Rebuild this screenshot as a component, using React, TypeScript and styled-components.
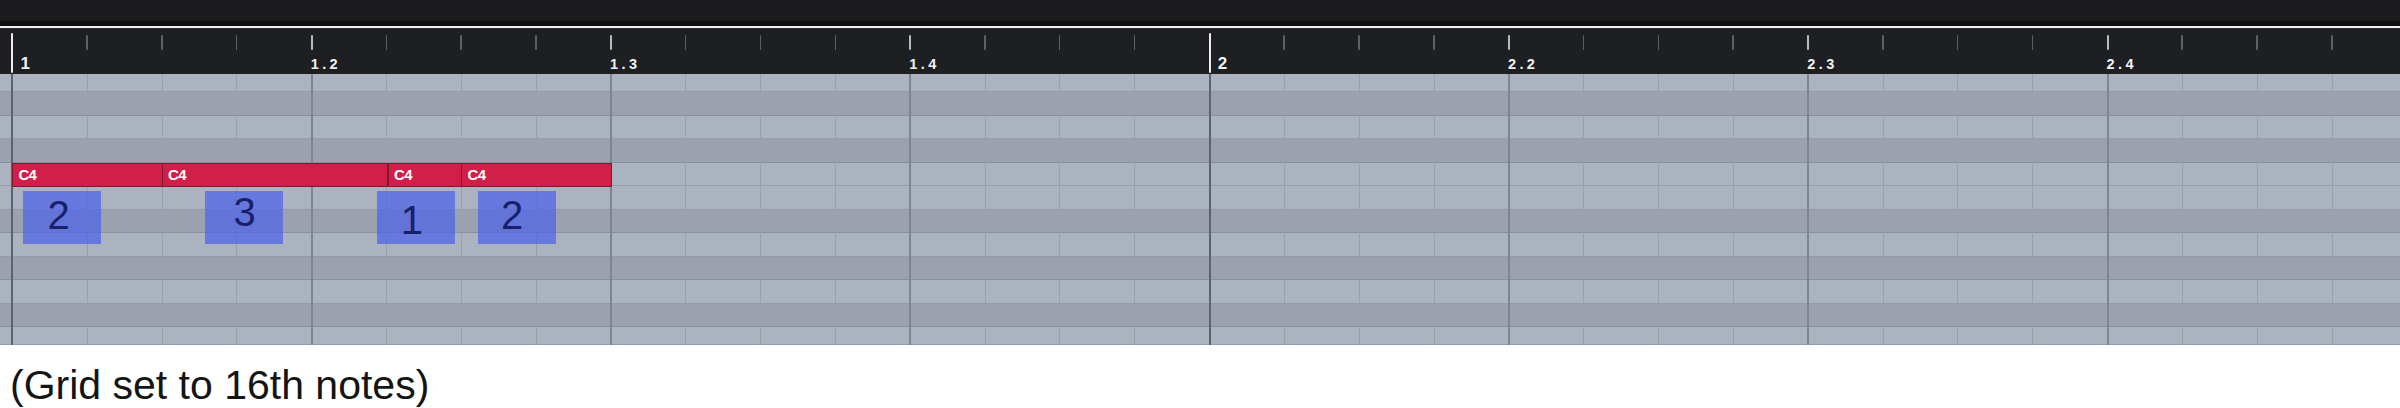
import React from "react";
import styled, { createGlobalStyle } from "styled-components";

const X0 = 12.4;
const W = 74.84;
const COLS = 32;

const Global = createGlobalStyle`
  html, body { margin: 0; padding: 0; background: #ffffff; }
  body { font-family: "Liberation Sans", Arial, sans-serif; }
`;

const Page = styled.div`
  width: 2400px;
  overflow: hidden;
  display: flex;
  flex-direction: column;
`;

const TopBar = styled.div`
  height: 26px;
  background: linear-gradient(#1b1b1d 0, #1b1b1d 21px, #0f0f10 21px, #0f0f10 100%);
  border-bottom: 2.5px solid #eeeeee;
`;

const Ruler = styled.div`
  height: 45px;
  background: #1d1f23;
  border-top: 0.5px solid #2a2c31;
  display: flex;
  flex-direction: row;
  align-items: stretch;
`;

const Spacer = styled.div<{ $w: number }>`
  flex: 0 0 ${(p) => p.$w}px;
`;

type Kind = "bar" | "beat" | "six";

const RulerCell = styled.div`
  flex: 0 0 ${W}px;
  display: flex;
  flex-direction: row;
  align-items: flex-start;
`;

const Tick = styled.div<{ $kind: Kind }>`
  flex: 0 0 ${(p) => (p.$kind === "six" ? 1.5 : 2)}px;
  margin-left: -1px;
  margin-top: ${(p) => (p.$kind === "bar" ? 3.5 : 5.5)}px;
  height: ${(p) => (p.$kind === "bar" ? 40 : 15)}px;
  background: ${(p) =>
    p.$kind === "bar" ? "#ececec" : p.$kind === "beat" ? "#b9babc" : "#5d6065"};
  border-radius: 1px;
`;

const RulerLabel = styled.span<{ $bar: boolean }>`
  align-self: flex-end;
  margin-bottom: 3px;
  margin-left: ${(p) => (p.$bar ? 7 : -2)}px;
  color: #f2f2f2;
  font-weight: bold;
  font-size: ${(p) => (p.$bar ? 17 : 14.5)}px;
  letter-spacing: ${(p) => (p.$bar ? 0 : 3.4)}px;
  line-height: 14px;
  white-space: nowrap;
`;

const Grid = styled.div`
  position: relative;
  height: 271px;
  display: flex;
  flex-direction: column;
  overflow: hidden;
`;

const Row = styled.div<{ $h: number; $dark: boolean }>`
  flex: 0 0 ${(p) => p.$h}px;
  box-sizing: border-box;
  background: ${(p) => (p.$dark ? "#9ba2ad" : "#aab3bf")};
  border-bottom: 1px solid rgba(70, 80, 96, 0.22);
`;

const Lines = styled.div`
  position: absolute;
  inset: 0;
  display: flex;
  flex-direction: row;
  pointer-events: none;
`;

const LineCell = styled.div<{ $kind: Kind }>`
  flex: 0 0 ${W}px;
  box-sizing: border-box;
  margin-left: ${(p) => (p.$kind === "six" ? -0.5 : -1)}px;
  margin-right: ${(p) => (p.$kind === "six" ? 0.5 : 1)}px;
  border-left: ${(p) => (p.$kind === "six" ? 1.5 : 2)}px solid
    ${(p) =>
      p.$kind === "bar" ? "#5c636e" : p.$kind === "beat" ? "#7d8591" : "#99a1ac"};
`;

const Note = styled.div<{ $left: number; $width: number }>`
  position: absolute;
  top: 89px;
  left: ${(p) => p.$left}px;
  width: ${(p) => p.$width}px;
  height: 24px;
  box-sizing: border-box;
  background: #d21f4a;
  border: 1px solid #7e1a2e;
  color: #ffffff;
  font-weight: bold;
  font-size: 15px;
  letter-spacing: -0.6px;
  line-height: 22px;
  padding-left: 5px;
`;

const Box = styled.div<{ $left: number; $pad: number; $dx: number }>`
  position: absolute;
  top: 117px;
  left: ${(p) => p.$left}px;
  width: 78px;
  height: 53px;
  box-sizing: border-box;
  background: rgba(78, 98, 234, 0.72);
  display: flex;
  justify-content: center;
  align-items: flex-start;
  padding-top: ${(p) => p.$pad}px;
  padding-left: ${(p) => Math.max(0, p.$dx * 2)}px;
  padding-right: ${(p) => Math.max(0, -p.$dx * 2)}px;
  color: #1a1f6c;
  font-size: 40px;
  line-height: 40px;
`;

const Caption = styled.div`
  padding: 17px 0 0 10px;
  font-size: 41px;
  line-height: 46px;
  color: #141414;
  white-space: nowrap;
`;

const kindOf = (i: number): Kind => (i % 16 === 0 ? "bar" : i % 4 === 0 ? "beat" : "six");
const labelOf = (i: number): string | null => {
  if (i % 4 !== 0) return null;
  const bar = Math.floor(i / 16) + 1;
  const beat = Math.floor((i % 16) / 4) + 1;
  return beat === 1 ? `${bar}` : `${bar}.${beat}`;
};

const rows: { h: number; dark: boolean }[] = [
  { h: 18, dark: false },
  { h: 23.5, dark: true },
  { h: 23.5, dark: false },
  { h: 23.5, dark: true },
  { h: 23.5, dark: false },
  { h: 23.5, dark: false },
  { h: 23.5, dark: true },
  { h: 23.5, dark: false },
  { h: 23.5, dark: true },
  { h: 23.5, dark: false },
  { h: 23.5, dark: true },
  { h: 18, dark: false },
];

const notes = [
  { start: 0, len: 2 },
  { start: 2, len: 3 },
  { start: 5.02, len: 0.98 },
  { start: 6, len: 2 },
];

const boxes = [
  { left: 22.7, n: "2", pad: 4, dx: -3 },
  { left: 204.7, n: "3", pad: 0.5, dx: 1 },
  { left: 377.3, n: "1", pad: 9, dx: -4.5 },
  { left: 477.7, n: "2", pad: 4, dx: -4.5 },
];

const cols = Array.from({ length: COLS }, (_, i) => i);

export default function App() {
  return (
    <Page>
      <Global />
      <TopBar />
      <Ruler>
        <Spacer $w={X0} />
        {cols.map((i) => {
          const k = kindOf(i);
          const l = labelOf(i);
          return (
            <RulerCell key={i}>
              <Tick $kind={k} />
              {l && <RulerLabel $bar={k === "bar"}>{l}</RulerLabel>}
            </RulerCell>
          );
        })}
      </Ruler>
      <Grid>
        {rows.map((r, i) => (
          <Row key={i} $h={r.h} $dark={r.dark} />
        ))}
        <Lines>
          <Spacer $w={X0} />
          {cols.map((i) => (
            <LineCell key={i} $kind={kindOf(i)} />
          ))}
        </Lines>
        {notes.map((n, i) => (
          <Note key={i} $left={X0 + n.start * W} $width={n.len * W + 1}>
            C4
          </Note>
        ))}
        {boxes.map((b, i) => (
          <Box key={i} $left={b.left} $pad={b.pad} $dx={b.dx}>
            {b.n}
          </Box>
        ))}
      </Grid>
      <Caption>(Grid set to 16th notes)</Caption>
    </Page>
  );
}
